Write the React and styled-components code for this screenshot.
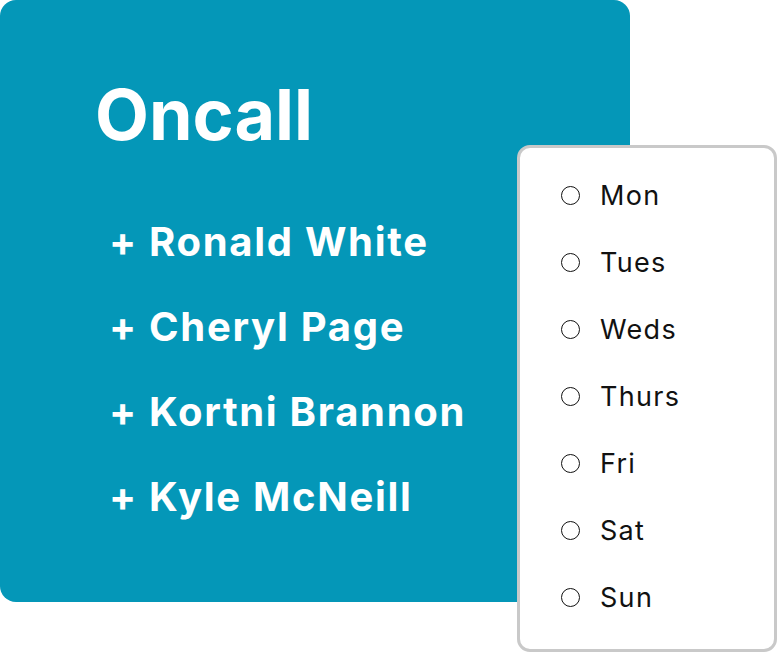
import React from 'react';
import styled, { createGlobalStyle } from 'styled-components';

const GlobalStyle = createGlobalStyle`
  html, body {
    margin: 0;
    padding: 0;
    background: #ffffff;
  }
  body {
    font-family: Inter, "Noto Sans", "Liberation Sans", sans-serif;
  }
`;

const Page = styled.div`
  position: relative;
  width: 777px;
  height: 654px;
  overflow: hidden;
`;

const Card = styled.section`
  width: 630px;
  height: 602px;
  box-sizing: border-box;
  padding-left: 95px;
  background-color: #0497b8;
  border-radius: 16px;
  color: #ffffff;
  display: flex;
  flex-direction: column;
`;

const Title = styled.h1`
  margin: 80px 0 0;
  font-size: 70px;
  line-height: 70px;
  font-weight: 700;
  letter-spacing: 0;
`;

const Members = styled.ul`
  list-style: none;
  margin: 49px 0 0;
  padding: 0 0 0 14px;
`;

const Member = styled.li`
  font-size: 40px;
  line-height: 85px;
  font-weight: 700;
  letter-spacing: 1.7px;
  white-space: nowrap;
`;

const DayPicker = styled.div`
  position: absolute;
  left: 517px;
  top: 145px;
  width: 260px;
  height: 507px;
  box-sizing: border-box;
  padding: 14px 0 0 41px;
  background: #ffffff;
  border: 3px solid #c9c9c9;
  border-radius: 13px;
`;

const DayRow = styled.label`
  display: flex;
  align-items: center;
  gap: 20px;
  height: 67px;
  font-size: 27px;
  letter-spacing: 1.3px;
  color: #111111;
  cursor: pointer;
`;

const Radio = styled.span`
  display: inline-block;
  width: 19px;
  height: 19px;
  box-sizing: border-box;
  border: 1.5px solid #111111;
  border-radius: 50%;
  flex-shrink: 0;
`;

const members = ['Ronald White', 'Cheryl Page', 'Kortni Brannon', 'Kyle McNeill'];
const days = ['Mon', 'Tues', 'Weds', 'Thurs', 'Fri', 'Sat', 'Sun'];

export default function App() {
  return (
    <Page>
      <GlobalStyle />
      <Card>
        <Title>Oncall</Title>
        <Members>
          {members.map((name) => (
            <Member key={name}>+ {name}</Member>
          ))}
        </Members>
      </Card>
      <DayPicker>
        {days.map((day) => (
          <DayRow key={day}>
            <Radio />
            <span>{day}</span>
          </DayRow>
        ))}
      </DayPicker>
    </Page>
  );
}
